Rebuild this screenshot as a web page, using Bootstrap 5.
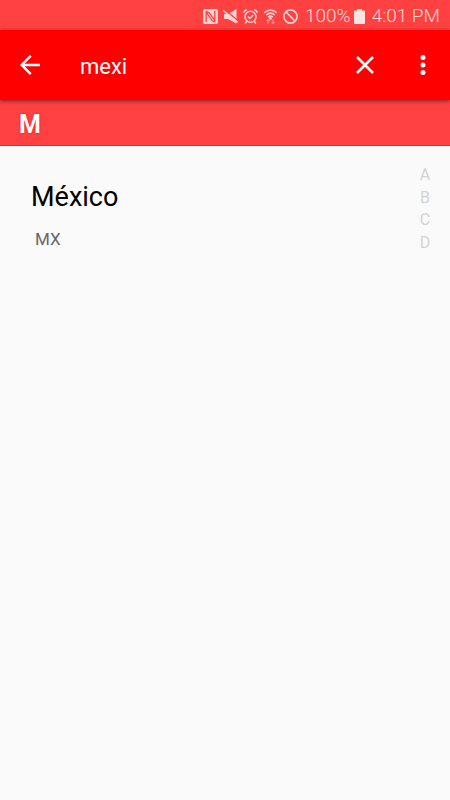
<!DOCTYPE html>
<html lang="es">
<head>
<meta charset="utf-8">
<meta name="viewport" content="width=device-width, initial-scale=1">
<title>mexi</title>
<link href="https://cdn.jsdelivr.net/npm/bootstrap@5.3.0/dist/css/bootstrap.min.css" rel="stylesheet">
<style>
  body { font-family: Roboto, sans-serif; background: #fafafa; color: #000; }
  svg { display: block; flex: none; }
  .status-bar { height: 30px; padding: 2px 10px 0 0; background: #ff4141; color: #ffdcdc; font-size: 19px; font-weight: 300; line-height: 28px; }
  .status-icons { gap: 5px; margin-right: 7px; color: #ffd4d4; }
  .status-battery { margin: 0 7px 0 3px; }
  .app-bar { height: 70px; background: #f00; box-shadow: 0 1px 4px rgba(0,0,0,.5); z-index: 1; }
  .icon-btn { flex: none; width: 60px; height: 60px; border: 0; background: none; color: #fff; display: flex; align-items: center; justify-content: center; padding: 0; }
  .more-btn { width: 55px; }
  .search-field { min-width: 0; width: 0; border: 0; outline: 0; background: none; color: #fff; font-size: 22px; line-height: 28px; padding: 3px 0 0; margin-left: 20px; }
  .section-title { margin: 0; height: 46px; padding: 3px 19px 0; background: #ff4141; border-bottom: 1px solid #ff2020; color: #fff; font-size: 25px; font-weight: 700; line-height: 43px; text-shadow: 0 0 2px #f00; }
  .country { padding: 34px 0 0 31px; color: #000; text-decoration: none; }
  .country-name { font-size: 27px; line-height: 34px; }
  .country-code { font-size: 17px; line-height: 24px; margin-top: 13px; padding-left: 4px; color: #666; }
  .index-list { height: 90px; width: 50px; margin-top: 18px; font-size: 16px; line-height: 22px; }
  .index-list a { color: #d3d3d3; text-decoration: none; }
</style>
<script src="https://cdn.jsdelivr.net/npm/bootstrap@5.3.0/dist/js/bootstrap.bundle.min.js"></script>
</head>
<body>
<div class="status-bar d-flex align-items-center justify-content-end">
  <div class="status-icons d-flex align-items-center">
    <svg width="15" height="15" viewBox="0 0 15 15"><rect width="15" height="15" rx="2" fill="currentColor"/><path d="M3.200 13V2.500l3 1.200 5.600 8V2M3.200 3.200l6 8.600 2.600 1" fill="none" stroke="#ff4141" stroke-width="1.300"/></svg>
    <svg width="15" height="15" viewBox="0 0 15 15"><path d="M1 5h4L13.500 0v14.500L5 10H1z" fill="currentColor"/><path d="M1 0 15.500 12" stroke="#ff4141" stroke-width="1.400"/><path d="M0 1.300 14.500 13.300" stroke="currentColor" stroke-width="1.600"/></svg>
    <svg width="15" height="15" viewBox="0 0 15 15" fill="none" stroke="currentColor" stroke-width="1.500"><circle cx="7.500" cy="7.800" r="5.500"/><path d="m4.800 7.500 2 2 3.500-3.500M1 3.700Q1 1 3.900 1M14 3.700Q14 1 11.100 1M3.700 12.200l-1.500 2.300M11.300 12.200l1.500 2.300"/></svg>
    <svg width="15" height="15" viewBox="0 0 15 15" fill="none" stroke="currentColor" stroke-width="1.500"><path d="M1.300 3.700Q7.500-1.800 13.700 3.700M3.300 6Q7.500 2.200 11.700 6M5.200 8.100Q7.500 6 9.800 8.100"/><circle cx="7.500" cy="9.400" r=".6" fill="currentColor"/><path d="M5 14.500v-4M3.500 12l1.500-1.500L6.500 12M10 10.500v4M8.500 13l1.500 1.500 1.500-1.500" stroke="#ff9090" stroke-width="1.100"/></svg>
    <svg width="15" height="15" viewBox="0 0 15 15" fill="none" stroke="currentColor" stroke-width="1.600"><circle cx="7.500" cy="7.500" r="6.600"/><path d="m2.800 2.800 9.400 9.400"/></svg>
  </div>
  <span>100%</span>
  <svg class="status-battery" width="11" height="15" viewBox="0 0 11 15"><path d="M3 0h5v1.500h2q1 0 1 1V14q0 1-1 1H1q-1 0-1-1V2.500q0-1 1-1h2z" fill="#ffe2e2"/></svg>
  <span>4:01 PM</span>
</div>
<header class="app-bar d-flex align-items-center position-relative">
  <button type="button" class="icon-btn" aria-label="Back"><svg width="20" height="20" viewBox="0 0 20 20" fill="none" stroke="currentColor" stroke-width="2.400"><path d="M20 10H1.800M10.800.9 1.700 10l9.100 9.100"/></svg></button>
  <input class="search-field flex-grow-1" type="text" value="mexi" aria-label="Search">
  <button type="button" class="icon-btn" aria-label="Clear"><svg width="18" height="18" viewBox="0 0 18 18" fill="none" stroke="currentColor" stroke-width="2.500"><path d="m1 1 16 16M17 1 1 17"/></svg></button>
  <button type="button" class="icon-btn more-btn" aria-label="More options"><svg width="6" height="20" viewBox="0 0 6 20" fill="currentColor"><circle cx="3" cy="2.500" r="2.500"/><circle cx="3" cy="10" r="2.500"/><circle cx="3" cy="17.500" r="2.500"/></svg></button>
</header>
<main>
  <h2 class="section-title">M</h2>
  <div class="d-flex justify-content-between align-items-start">
    <a href="#" class="country flex-grow-1">
      <div class="country-name">México</div>
      <div class="country-code">MX</div>
    </a>
    <nav class="index-list d-flex flex-column justify-content-between text-center" aria-label="Index">
      <a href="#">A</a><a href="#">B</a><a href="#">C</a><a href="#">D</a>
    </nav>
  </div>
</main>
</body>
</html>
